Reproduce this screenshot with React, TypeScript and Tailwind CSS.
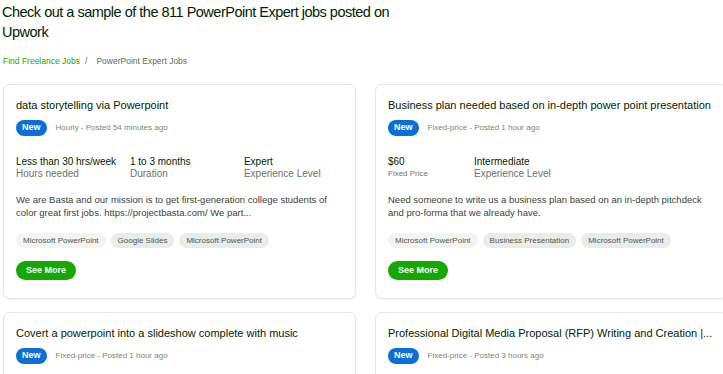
import React from "react";

type Stat = { value: string; label: string; small?: boolean; w: string };
type Job = {
  title: string;
  meta: string;
  stats?: Stat[];
  desc?: string;
  skills?: string[];
  full: boolean;
};

const jobs: Job[] = [
  {
    title: "data storytelling via Powerpoint",
    meta: "Hourly - Posted 54 minutes ago",
    stats: [
      { value: "Less than 30 hrs/week", label: "Hours needed", w: "w-[115px]" },
      { value: "1 to 3 months", label: "Duration", w: "w-[115px]" },
      { value: "Expert", label: "Experience Level", w: "w-[100px]" },
    ],
    desc:
      "We are Basta and our mission is to get first-generation college students of color great first jobs. https://projectbasta.com/ We part...",
    skills: ["Microsoft PowerPoint", "Google Slides", "Microsoft PowerPoint"],
    full: true,
  },
  {
    title: "Business plan needed based on in-depth power point presentation",
    meta: "Fixed-price - Posted 1 hour ago",
    stats: [
      { value: "$60", label: "Fixed Price", small: true, w: "w-[86px]" },
      { value: "Intermediate", label: "Experience Level", w: "w-[115px]" },
    ],
    desc:
      "Need someone to write us a business plan based on an in-depth pitchdeck and pro-forma that we already have.",
    skills: ["Microsoft PowerPoint", "Business Presentation", "Microsoft PowerPoint"],
    full: true,
  },
  {
    title: "Covert a powerpoint into a slideshow complete with music",
    meta: "Fixed-price - Posted 1 hour ago",
    full: false,
  },
  {
    title: "Professional Digital Media Proposal (RFP) Writing and Creation |...",
    meta: "Fixed-price - Posted 3 hours ago",
    full: false,
  },
];

function Card({ job }: { job: Job }) {
  return (
    <div className="rounded-[7px] border border-[#e3e8e2] bg-white px-[12px] pt-[13px] pb-[18px] shadow-[0_1px_2px_rgba(0,0,0,0.05)]">
      <div className="whitespace-nowrap text-[11px] leading-[14px] text-[#001e00]">{job.title}</div>
      <div className="mt-[8px] flex items-center gap-[9px]">
        <span className="flex h-[16px] items-center rounded-full bg-[#0a6fd8] px-[6px] text-[9px] font-bold text-white">
          New
        </span>
        <span className="text-[8px] text-[#7b8577]">{job.meta}</span>
      </div>
      {job.stats && (
        <div className="mt-[20px] flex">
          {job.stats.map((s, i) => (
            <div key={i} className={s.w}>
              <div className="text-[10px] leading-[12px] text-[#001e00]">{s.value}</div>
              <div
                className={
                  s.small
                    ? "text-[8px] leading-[12px] text-[#6a7566]"
                    : "text-[10px] leading-[12px] text-[#6a7566]"
                }
              >
                {s.label}
              </div>
            </div>
          ))}
        </div>
      )}
      {job.desc && (
        <div className="mt-[13px] pr-[4px] text-[9.5px] leading-[13px] text-[#3a4338]">{job.desc}</div>
      )}
      {job.skills && (
        <div className="mt-[14px] flex gap-[5px]">
          {job.skills.map((sk, i) => (
            <span
              key={i}
              className={
                i === 0
                  ? "flex h-[15px] items-center rounded-full bg-[#f2f4f1] px-[7px] text-[8px] text-[#4f574d]"
                  : "flex h-[15px] items-center rounded-full bg-[#e9ece8] px-[7px] text-[8px] text-[#4f574d]"
              }
            >
              {sk}
            </span>
          ))}
        </div>
      )}
      {job.full && (
        <div className="mt-[13px] flex">
          <span className="flex h-[19px] items-center rounded-full bg-[#14a800] px-[10px] text-[9px] font-bold text-white">
            See More
          </span>
        </div>
      )}
    </div>
  );
}

export default function App() {
  return (
    <div
      className="h-[374px] w-[723px] overflow-hidden bg-white"
      style={{ fontFamily: "'Liberation Sans', Arial, sans-serif" }}
    >
      <h1 className="w-[400px] pt-[2px] pl-[2px] text-[14.5px] leading-[20px] tracking-[-0.5px] text-[#001e00]">
        Check out a sample of the 811 PowerPoint Expert jobs posted on Upwork
      </h1>
      <div className="mt-[13px] flex items-center px-[3px] text-[8.5px] leading-[12px]">
        <span className="text-[#14a800]">Find Freelance Jobs</span>
        <span className="ml-[5px] text-[#5e6d55]">/</span>
        <span className="ml-[9px] text-[#5e6d55]">PowerPoint Expert Jobs</span>
      </div>
      <div className="mt-[17px] grid w-[740px] grid-cols-[353px_353px] gap-x-[19px] gap-y-[13px] pl-[3px]">
        {jobs.map((j, i) => (
          <Card key={i} job={j} />
        ))}
      </div>
    </div>
  );
}
